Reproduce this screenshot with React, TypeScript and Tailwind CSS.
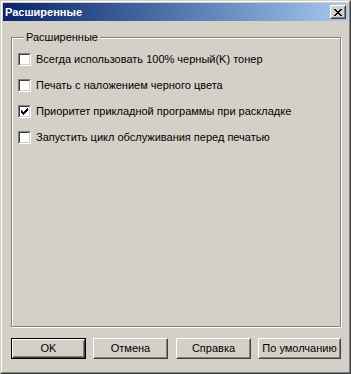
import type { ReactNode } from "react";

const font = { fontFamily: '"Liberation Sans", Arial, sans-serif' };

const CHECK_ROWS = ["......#", ".....##", "#...###", "##.###.", "#####..", ".###...", "..#...."];

function CheckMark() {
  return (
    <svg width="7" height="7" viewBox="0 0 7 7" shapeRendering="crispEdges" className="block">
      {CHECK_ROWS.flatMap((row, y) =>
        row.split("").map((c, x) => (c === "#" ? <rect key={`${x}-${y}`} x={x} y={y} width="1" height="1" fill="#000" /> : null)),
      )}
    </svg>
  );
}

function CheckRow({ label, checked = false }: { label: string; checked?: boolean }) {
  return (
    <div className="flex h-[13px] items-center">
      <span className="h-[13px] w-[13px] shrink-0 border border-t-[#808080] border-l-[#808080] border-b-white border-r-white">
        <span className="flex h-full w-full items-center justify-center border border-t-[#404040] border-l-[#404040] border-b-[#d4d0c8] border-r-[#d4d0c8] bg-white">
          {checked ? <CheckMark /> : null}
        </span>
      </span>
      <span className="ml-[5px] text-[11px] leading-[13px] text-black whitespace-nowrap">{label}</span>
    </div>
  );
}

function Button({ children, width, isDefault = false }: { children: ReactNode; width: string; isDefault?: boolean }) {
  const face = (
    <div className="h-full w-full border border-t-white border-l-white border-b-[#404040] border-r-[#404040]">
      <div className="flex h-full w-full items-center justify-center border border-t-[#d4d0c8] border-l-[#d4d0c8] border-b-[#808080] border-r-[#808080] text-[11px] text-black">
        {children}
      </div>
    </div>
  );
  return (
    <div className={`${width} h-[21px] bg-[#d4d0c8] ${isDefault ? "border border-black" : ""}`}>{face}</div>
  );
}

export default function App() {
  return (
    <div className="h-[374px] w-[351px] bg-[#d4d0c8]" style={font}>
      <div className="h-full w-full border border-t-[#d4d0c8] border-l-[#d4d0c8] border-b-[#404040] border-r-[#404040]">
        <div className="flex h-full w-full flex-col border border-t-white border-l-white border-b-[#808080] border-r-[#808080] p-px">
          <div className="flex h-[18px] items-center justify-between bg-gradient-to-r from-[#0a246a] to-[#a6caf0] pl-[2px] pr-[2px]">
            <span className="text-[11px] font-bold leading-none text-white">Расширенные</span>
            <div className="h-[14px] w-[16px] border border-t-white border-l-white border-b-[#404040] border-r-[#404040] bg-[#d4d0c8]">
              <div className="flex h-full w-full items-center justify-center border border-t-[#d4d0c8] border-l-[#d4d0c8] border-b-[#808080] border-r-[#808080]">
                <svg width="8" height="7" viewBox="0 0 8 7" shapeRendering="crispEdges" className="block">
                  <path d="M0 0h2v1h-2zM6 0h2v1h-2zM1 1h2v1h-2zM5 1h2v1h-2zM2 2h4v1h-4zM3 3h2v1h-2zM2 4h4v1h-4zM1 5h2v1h-2zM5 5h2v1h-2zM0 6h2v1h-2zM6 6h2v1h-2z" fill="#000" />
                </svg>
              </div>
            </div>
          </div>

          <div className="pl-[8px] pt-[10px]">
            <fieldset className="h-[296px] w-[330px] border border-[#808080] px-[6px] pt-[9px] shadow-[inset_1px_1px_0_#fff,1px_1px_0_#fff]">
              <legend className="ml-[6px] bg-[#d4d0c8] px-[2px] text-[11px] leading-[13px] text-black">Расширенные</legend>
              <div className="flex flex-col gap-[13px]">
                <CheckRow label="Всегда использовать 100% черный(K) тонер" />
                <CheckRow label="Печать с наложением черного цвета" />
                <CheckRow label="Приоритет прикладной программы при раскладке" checked />
                <CheckRow label="Запустить цикл обслуживания перед печатью" />
              </div>
            </fieldset>

            <div className="mt-[11px] flex">
              <Button width="w-[75px]" isDefault>OK</Button>
              <div className="ml-[7px]">
                <Button width="w-[75px]">Отмена</Button>
              </div>
              <div className="ml-[8px]">
                <Button width="w-[75px]">Справка</Button>
              </div>
              <div className="ml-[7px]">
                <Button width="w-[83px]">По умолчанию</Button>
              </div>
            </div>
          </div>
        </div>
      </div>
    </div>
  );
}
